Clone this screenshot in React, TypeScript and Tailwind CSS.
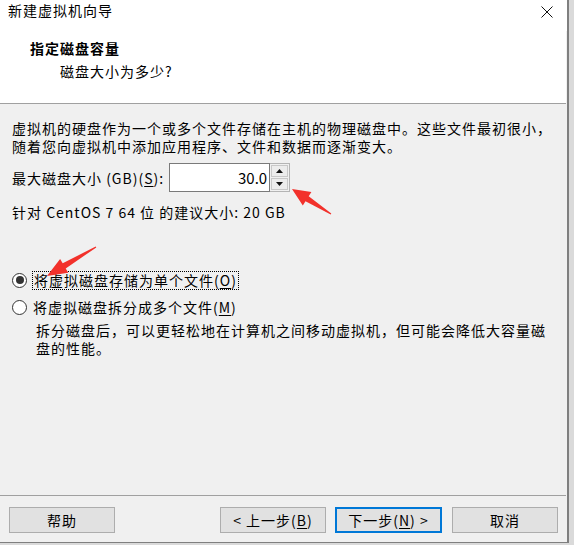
import React from 'react';

const font = { fontFamily: '"Noto Sans CJK SC", "Noto Sans", sans-serif' };

function Key({ k }: { k: string }) {
  return <span className="underline underline-offset-2">{k}</span>;
}

function WizardButton({ children, primary }: { children: React.ReactNode; primary?: boolean }) {
  return (
    <button
      className={
        primary
          ? 'w-[107px] h-[26px] bg-[#e1e1e1] border-2 border-[#0078d7] flex items-center justify-center text-[14px] tracking-[1px] text-black'
          : 'w-[106px] h-[26px] bg-[#e1e1e1] border border-[#adadad] flex items-center justify-center text-[14px] tracking-[1px] text-black'
      }
    >
      {children}
    </button>
  );
}

function Radio({ checked }: { checked?: boolean }) {
  return (
    <span className="w-[15px] h-[15px] rounded-full border border-[#333333] bg-white flex items-center justify-center shrink-0">
      {checked && <span className="w-[8px] h-[8px] rounded-full bg-[#333333]" />}
    </span>
  );
}

export default function App() {
  return (
    <div className="w-[574px] h-[545px] bg-[#dadada] overflow-hidden" style={font}>
      <div className="relative w-[569px] h-[543px] border-r-2 border-b border-[#7f7f7f] bg-[#f0f0f0] flex flex-col text-black">
        {/* Title bar */}
        <div className="h-[31px] bg-white flex items-start justify-between shrink-0">
          <div className="pl-[8px] pt-[2px] text-[14px] leading-[17px] tracking-[1px]">新建虚拟机向导</div>
          <svg width="12" height="12" viewBox="0 0 12 12" className="mt-[6px] mr-[14px]">
            <path d="M0.5 0.5 L11.5 11.5 M11.5 0.5 L0.5 11.5" stroke="#111" strokeWidth="1" />
          </svg>
        </div>

        {/* Header */}
        <div className="h-[73px] bg-white border-b border-[#a0a0a0] mr-[1px] shrink-0">
          <div className="pl-[30px] pt-[9px] text-[14px] leading-[17px] tracking-[1px] font-bold">指定磁盘容量</div>
          <div className="pl-[60px] pt-[6px] text-[14px] leading-[17px] tracking-[1px]">磁盘大小为多少?</div>
        </div>

        {/* Body */}
        <div className="flex-1 text-[14px] leading-[18px] tracking-[1px] pl-[12px] pt-[15px] border-b border-[#a0a0a0] mr-[1px]">
          <p>
            虚拟机的硬盘作为一个或多个文件存储在主机的物理磁盘中。这些文件最初很小，
            <br />
            随着您向虚拟机中添加应用程序、文件和数据而逐渐变大。
          </p>

          <div className="flex items-center mt-[8px]">
            <span>
              最大磁盘大小 (GB)(<Key k="S" />):
            </span>
            <div className="ml-[5px] flex h-[29px]">
              <div className="w-[101px] h-full bg-white border border-[#7a7a7a] flex items-center justify-end pr-[2px] tracking-normal text-[15px]">
                30.0
              </div>
              <div className="w-[20px] h-full flex flex-col border border-l-0 border-[#b4b4b4] bg-[#f0f0f0]">
                <div className="flex-1 m-[1px] mb-0 border border-[#c8c8c8] bg-[#ececec] flex items-center justify-center">
                  <svg width="7" height="4" viewBox="0 0 7 4">
                    <path d="M3.5 0 L7 4 L0 4 Z" fill="#111" />
                  </svg>
                </div>
                <div className="flex-1 m-[1px] border border-[#c8c8c8] bg-[#ececec] flex items-center justify-center">
                  <svg width="7" height="4" viewBox="0 0 7 4">
                    <path d="M0 0 L7 0 L3.5 4 Z" fill="#111" />
                  </svg>
                </div>
              </div>
            </div>
          </div>

          <p className="mt-[11px]">针对 CentOS 7 64 位 的建议大小: 20 GB</p>

          <div className="flex items-center mt-[50px] h-[18px]">
            <Radio checked />
            <span className="ml-[5px] h-[19px] flex items-center border border-dotted border-black pl-[1px] pr-[1px]">
              将虚拟磁盘存储为单个文件(<Key k="O" />)
            </span>
          </div>

          <div className="flex items-center mt-[9px] h-[18px]">
            <Radio />
            <span className="ml-[6px]">
              将虚拟磁盘拆分成多个文件(<Key k="M" />)
            </span>
          </div>

          <p className="mt-[5px] pl-[24px]">
            拆分磁盘后，可以更轻松地在计算机之间移动虚拟机，但可能会降低大容量磁
            <br />
            盘的性能。
          </p>
        </div>

        {/* Footer */}
        <div className="h-[46px] flex items-start pt-[11px] pl-[9px] shrink-0">
          <WizardButton>帮助</WizardButton>
          <div className="ml-[105px]">
            <WizardButton>
              &lt; 上一步(<Key k="B" />)
            </WizardButton>
          </div>
          <div className="ml-[9px]">
            <WizardButton primary>
              下一步(<Key k="N" />) &gt;
            </WizardButton>
          </div>
          <div className="ml-[10px]">
            <WizardButton>取消</WizardButton>
          </div>
        </div>

        {/* Annotation arrows */}
        <svg className="absolute left-0 top-0 pointer-events-none" width="569" height="545" viewBox="0 0 569 545">
          <polygon
            points="292,189 311.4,192 308.7,196.2 331.3,213.6 330.7,214.4 305.5,201.2 302.8,205.4"
            fill="#f2312b"
          />
          <polygon
            points="47,276 60.1,258.9 62.7,263.2 95.7,246.6 96.3,247.4 65.7,268.4 68.3,272.7"
            fill="#f2312b"
          />
        </svg>
      </div>
    </div>
  );
}
